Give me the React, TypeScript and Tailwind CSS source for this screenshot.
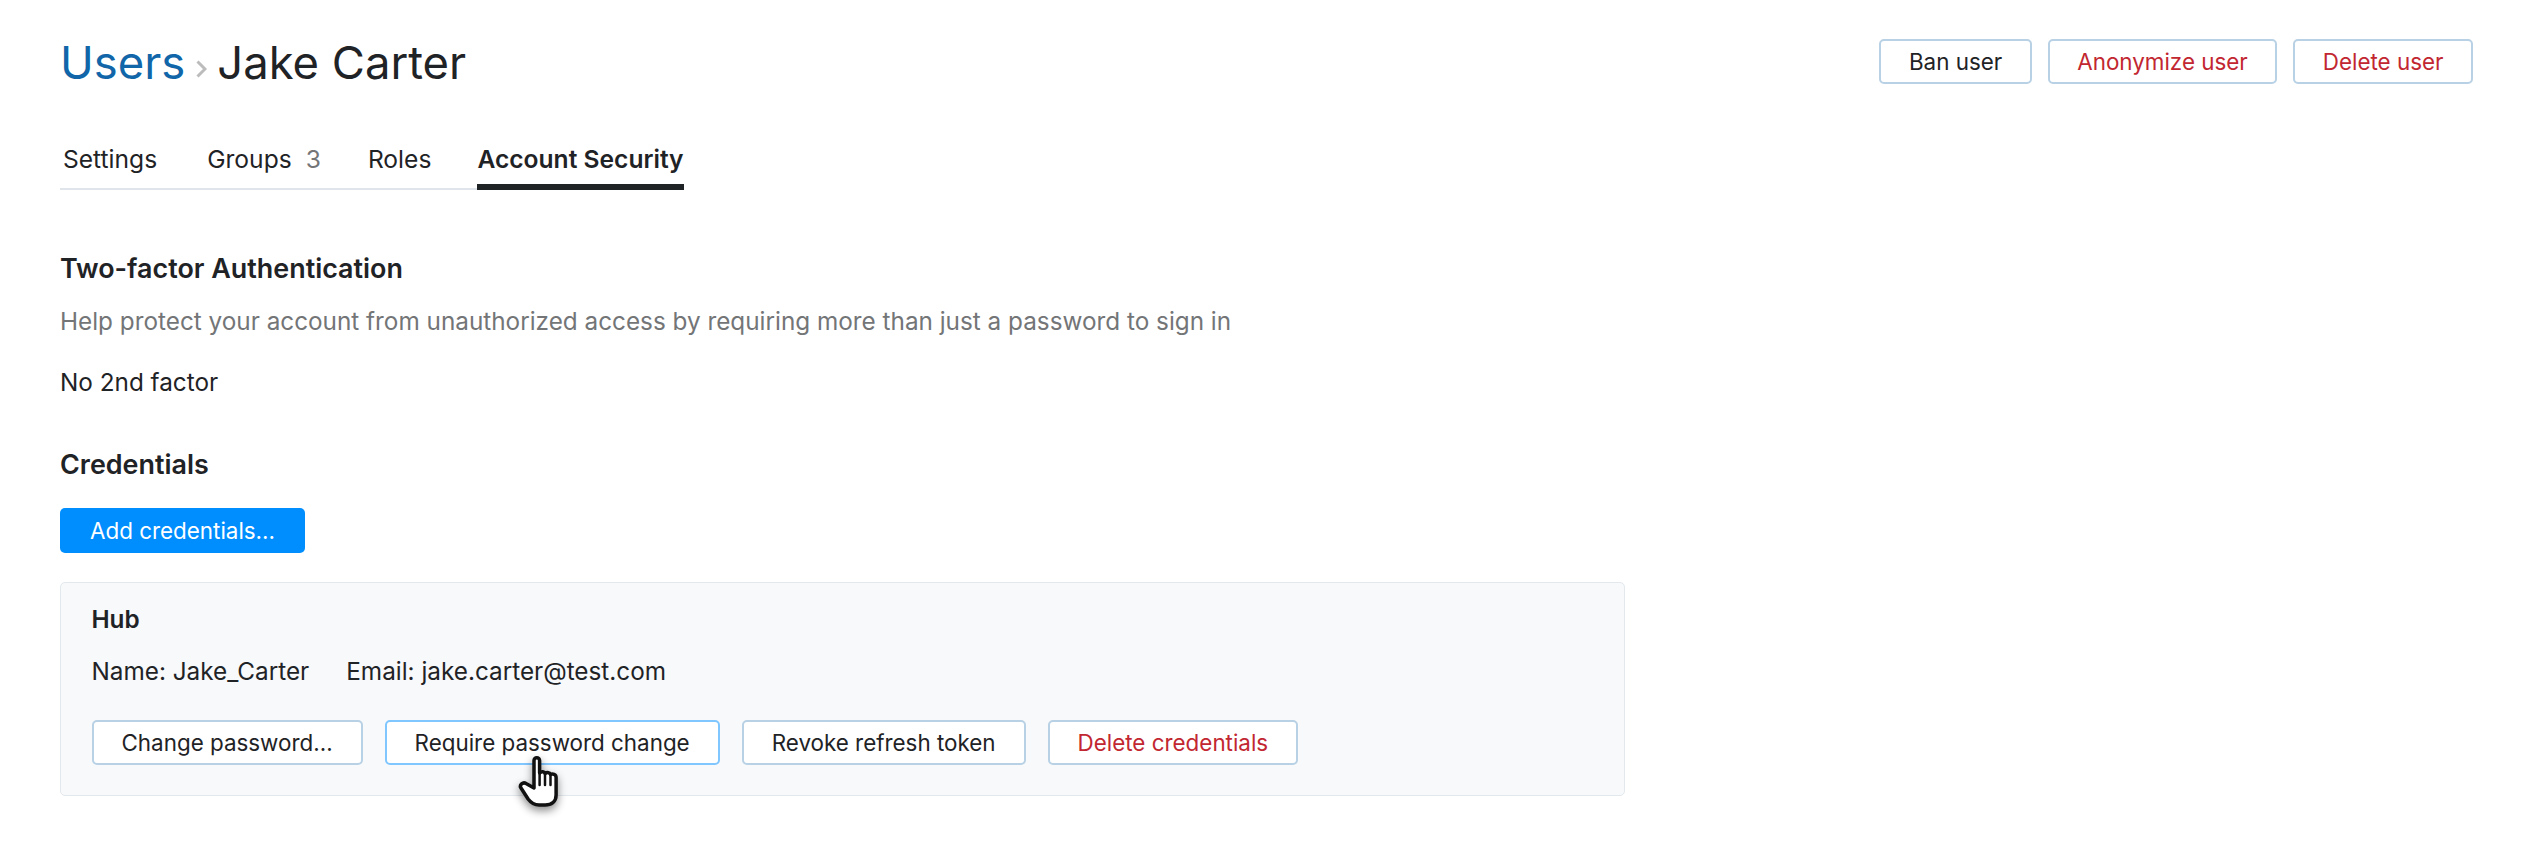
import React from 'react';

const font = "font-['Inter','Noto_Sans',sans-serif]";

// ============================================
// Button
// ============================================

function Btn({
  children,
  danger,
  hover,
  compact,
}: {
  children: React.ReactNode;
  danger?: boolean;
  hover?: boolean;
  compact?: boolean;
}) {
  return (
    <button
      className={`h-[45px] pt-[2px] rounded-[5px] border-2 bg-white text-[22.4px] leading-none whitespace-nowrap ${
        compact ? 'px-[27.500px]' : 'px-[28px]'
      } ${hover ? 'border-[#80c6ff]' : 'border-[#b8d1e5]'} ${danger ? 'text-[#c22731]' : 'text-[#1f2326]'}`}
    >
      {children}
    </button>
  );
}

// ============================================
// Hand cursor
// ============================================

function HandCursor() {
  return (
    <svg
      viewBox="0 0 44 54"
      className="absolute left-[457px] top-[172px] w-[44px] h-[54px] drop-shadow-[0_4px_4px_rgba(0,0,0,0.45)]"
      fill="#fff"
      stroke="#111"
      strokeWidth="3.500"
      strokeLinejoin="round"
      strokeLinecap="round"
    >
      <path d="M16 33V5.500a2.800 2.800 0 0 1 5.600 0V18c2-2 5-1.500 5.500 0.500 2-1.500 5-1 5.500 1 2-1 5.500-0.500 5.500 3V40c0 7-5 10-11 10h-6c-5 0-8-2-11-6L3 33c-2-3 2-6.500 5-4.500z" />
      <path d="M21.600 18v12M27 19v11M32.500 20v10" fill="none" strokeWidth="2.500" />
    </svg>
  );
}

// ============================================
// Page
// ============================================

export default function App() {
  return (
    <div className={`${font} min-h-[844px] bg-white text-[#1f2326] text-[24.300px] pl-[60px] pr-[57px] pt-[39px]`}>
      {/* Header */}
      <div className="flex items-center justify-between h-[45px]">
        <h1 className="flex items-center text-[45.400px] leading-none font-normal mt-[2px]">
          <span className="text-[#1066a8]">Users</span>
          <svg
            viewBox="0 0 11 18"
            className="ml-[11px] mr-[10px] mt-[12px] w-[11px] h-[18px]"
            fill="none"
            stroke="#bcbcbc"
            strokeWidth="3"
          >
            <path d="M1.500 1.500L9 9l-7.500 7.500" />
          </svg>
          <span>Jake Carter</span>
        </h1>
        <div className="flex gap-[16px]">
          <Btn compact>Ban user</Btn>
          <Btn compact danger>Anonymize user</Btn>
          <Btn compact danger>Delete user</Btn>
        </div>
      </div>

      {/* Tabs */}
      <div className="mt-[61px] w-[624px] flex gap-[47px] border-b-2 border-[#dfe5eb] h-[45px] text-[24.600px] whitespace-nowrap">
        <div className="pl-[3px] pr-[3px] leading-[28px]">Settings</div>
        <div className="leading-[28px]">
          Groups<span className="ml-[14px] text-[#737577]">3</span>
        </div>
        <div className="-mr-[1px] leading-[28px]">Roles</div>
        <div className="font-semibold leading-[28px] h-[45px] border-b-[6px] border-[#1f2326]">Account Security</div>
      </div>

      {/* Two-factor */}
      <h2 className="mt-[62px] text-[26.900px] leading-[32px] font-semibold">Two-factor Authentication</h2>
      <p className="mt-[21px] leading-[32px] text-[#737577]">
        Help protect your account from unauthorized access by requiring more than just a password to sign in
      </p>
      <p className="mt-[29px] leading-[32px]">No 2nd factor</p>

      {/* Credentials */}
      <h2 className="mt-[50px] text-[26.900px] leading-[32px] font-semibold">Credentials</h2>
      <button className="mt-[28px] h-[45px] px-[30px] pt-[2px] rounded-[5px] bg-[#008eff] text-[22.4px] text-white leading-none block">
        Add credentials...
      </button>

      <div className="relative mt-[29px] w-[1565px] h-[214px] rounded-[5px] border-[1.5px] border-[#e3e8ed] bg-[#f7f9fa] pl-[30.500px] pt-[19.500px]">
        <div className="font-semibold leading-[32px]">Hub</div>
        <div className="mt-[20px] flex gap-[37px] leading-[32px]">
          <span>Name: Jake_Carter</span>
          <span>Email: jake.carter@test.com</span>
        </div>
        <div className="mt-[33px] flex gap-[22px]">
          <Btn>Change password...</Btn>
          <Btn hover>Require password change</Btn>
          <Btn>Revoke refresh token</Btn>
          <Btn danger>Delete credentials</Btn>
        </div>
        <HandCursor />
      </div>
    </div>
  );
}
